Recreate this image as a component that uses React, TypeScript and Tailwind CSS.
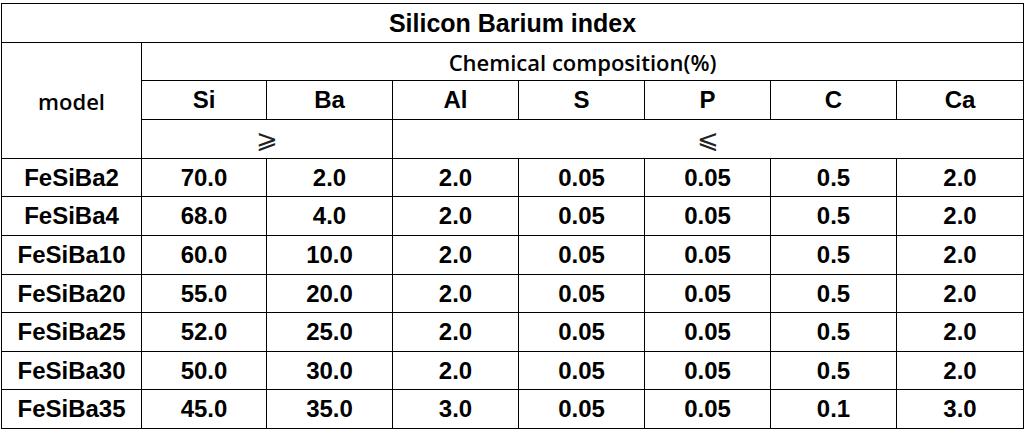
import React from 'react';

const rows = [
  { model: 'FeSiBa2', v: ['70.0', '2.0', '2.0', '0.05', '0.05', '0.5', '2.0'], h: 'h-[38px]' },
  { model: 'FeSiBa4', v: ['68.0', '4.0', '2.0', '0.05', '0.05', '0.5', '2.0'], h: 'h-[39px]' },
  { model: 'FeSiBa10', v: ['60.0', '10.0', '2.0', '0.05', '0.05', '0.5', '2.0'], h: 'h-[39px]' },
  { model: 'FeSiBa20', v: ['55.0', '20.0', '2.0', '0.05', '0.05', '0.5', '2.0'], h: 'h-[38px]' },
  { model: 'FeSiBa25', v: ['52.0', '25.0', '2.0', '0.05', '0.05', '0.5', '2.0'], h: 'h-[39px]' },
  { model: 'FeSiBa30', v: ['50.0', '30.0', '2.0', '0.05', '0.05', '0.5', '2.0'], h: 'h-[38px]' },
  { model: 'FeSiBa35', v: ['45.0', '35.0', '3.0', '0.05', '0.05', '0.1', '3.0'], h: 'h-[39px]' },
];

const elements = ['Si', 'Ba', 'Al', 'S', 'P', 'C', 'Ca'];

const arial = "font-['Liberation_Sans',Arial,sans-serif] font-bold";
const yahei = "font-['Open_Sans','Noto_Sans',sans-serif] font-semibold";

const App: React.FC = () => {
  return (
    <div className="w-[1024px] h-[430px] bg-white pt-[3px] pl-px overflow-hidden">
      <table className="table-fixed border-collapse w-[1023px] text-black">
        <colgroup>
          <col className="w-[140px]" />
          <col className="w-[125px]" />
          <col className="w-[126px]" />
          <col className="w-[126px]" />
          <col className="w-[126px]" />
          <col className="w-[126px]" />
          <col className="w-[126px]" />
          <col className="w-[127px]" />
        </colgroup>
        <tbody>
          <tr className="h-[39px]">
            <td colSpan={8} className={`border border-black text-center text-[25px] leading-none ${arial}`}>
              Silicon Barium index
            </td>
          </tr>
          <tr className="h-[38px]">
            <td rowSpan={3} className={`border border-black text-center text-[22px] leading-none ${yahei}`}>
              model
            </td>
            <td colSpan={7} className={`border border-black text-center text-[22px] leading-none ${yahei}`}>
              Chemical composition(%)
            </td>
          </tr>
          <tr className="h-[39px]">
            {elements.map((e) => (
              <td key={e} className={`border border-black text-center text-[24px] leading-none ${arial}`}>
                {e}
              </td>
            ))}
          </tr>
          <tr className="h-[39px]">
            <td colSpan={2} className="border border-black text-center text-[26px] leading-none font-['DejaVu_Sans',sans-serif] font-extralight text-[#222]">
              ⩾
            </td>
            <td colSpan={5} className="border border-black text-center text-[26px] leading-none font-['DejaVu_Sans',sans-serif] font-extralight text-[#222]">
              ⩽
            </td>
          </tr>
          {rows.map((r) => (
            <tr key={r.model} className={r.h}>
              <td className={`border border-black text-center text-[24px] leading-none ${arial}`}>{r.model}</td>
              {r.v.map((x, i) => (
                <td key={i} className={`border border-black text-center text-[24px] leading-none ${arial}`}>
                  {x}
                </td>
              ))}
            </tr>
          ))}
        </tbody>
      </table>
    </div>
  );
};

export default App;
